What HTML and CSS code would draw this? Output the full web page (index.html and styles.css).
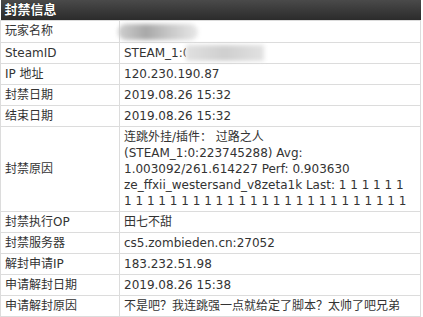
FILE: index.html
```html
<!DOCTYPE html>
<html lang="zh-CN">
<head>
<meta charset="utf-8">
<title>封禁信息</title>
<link rel="stylesheet" href="styles.css">
</head>
<body>
<table class="ban">
  <colgroup><col class="c1"><col class="c2"></colgroup>
  <thead>
    <tr><th colspan="2" class="head">封禁信息</th></tr>
  </thead>
  <tbody>
    <tr><td class="label">玩家名称</td><td class="value"><span class="blur blur-name"></span></td></tr>
    <tr><td class="label">SteamID</td><td class="value">STEAM_1:<span class="clip">0</span><span class="blur blur-id"></span></td></tr>
    <tr><td class="label">IP 地址</td><td class="value">120.230.190.87</td></tr>
    <tr><td class="label">封禁日期</td><td class="value">2019.08.26 15:32</td></tr>
    <tr><td class="label">结束日期</td><td class="value">2019.08.26 15:32</td></tr>
    <tr><td class="label">封禁原因</td><td class="value">连跳外挂/插件： 过路之人 (STEAM_1:0:223745288) Avg: 1.003092/261.614227 Perf: 0.903630 ze_ffxii_westersand_v8zeta1k Last: 1 1 1 1 1 1 1 1 1 1 1 1 1 1 1 1 1 1 1 1 1 1 1 1 1 1 1 1 1 1 1</td></tr>
    <tr><td class="label">封禁执行OP</td><td class="value">田七不甜</td></tr>
    <tr><td class="label">封禁服务器</td><td class="value">cs5.zombieden.cn:27052</td></tr>
    <tr><td class="label">解封申请IP</td><td class="value">183.232.51.98</td></tr>
    <tr><td class="label">申请解封日期</td><td class="value">2019.08.26 15:38</td></tr>
    <tr><td class="label">申请解封原因</td><td class="value">不是吧？我连跳强一点就给定了脚本？太帅了吧兄弟</td></tr>
  </tbody>
</table>
</body>
</html>
```
FILE: styles.css
```css
html, body {
  margin: 0;
  padding: 0;
  background: #ffffff;
}
body {
  font-family: "DejaVu Sans", "Noto Sans CJK SC", sans-serif;
  font-size: 12px;
  color: #333333;
}
.ban {
  border-collapse: collapse;
  width: 421px;
  table-layout: fixed;
}
.c1 {
  width: 119px;
}
.head {
  height: 20px;
  padding: 0 4px;
  text-align: left;
  font-size: 13px;
  font-weight: bold;
  color: #ffffff;
  line-height: 20px;
  background: linear-gradient(#4a4a4a, #2b2b2b);
  text-shadow: 0 0 1px #000;
}
.ban td {
  border: 1px solid #dcdcdc;
  padding: 2px 4px;
  line-height: 16px;
  vertical-align: middle;
}
.label {
  color: #333333;
}
.value {
  text-align: left;
}
.ban td.value {
  padding-right: 10px;
}
.blur {
  display: inline-block;
  vertical-align: middle;
  filter: blur(2px);
}
.blur-name {
  width: 80px;
  height: 16px;
  border-radius: 8px;
  background: linear-gradient(90deg, #d0d0d0, #a8a8a8 35%, #c8c8c8 65%, #e8e8e8);
  margin-left: -6px;
}
.clip {
  display: inline-block;
  width: 3px;
  overflow: hidden;
  vertical-align: bottom;
}
.blur-id {
  width: 78px;
  height: 16px;
  background: linear-gradient(90deg, #e0e0e0, #cfcfcf 50%, #e2e2e2);
}
```
